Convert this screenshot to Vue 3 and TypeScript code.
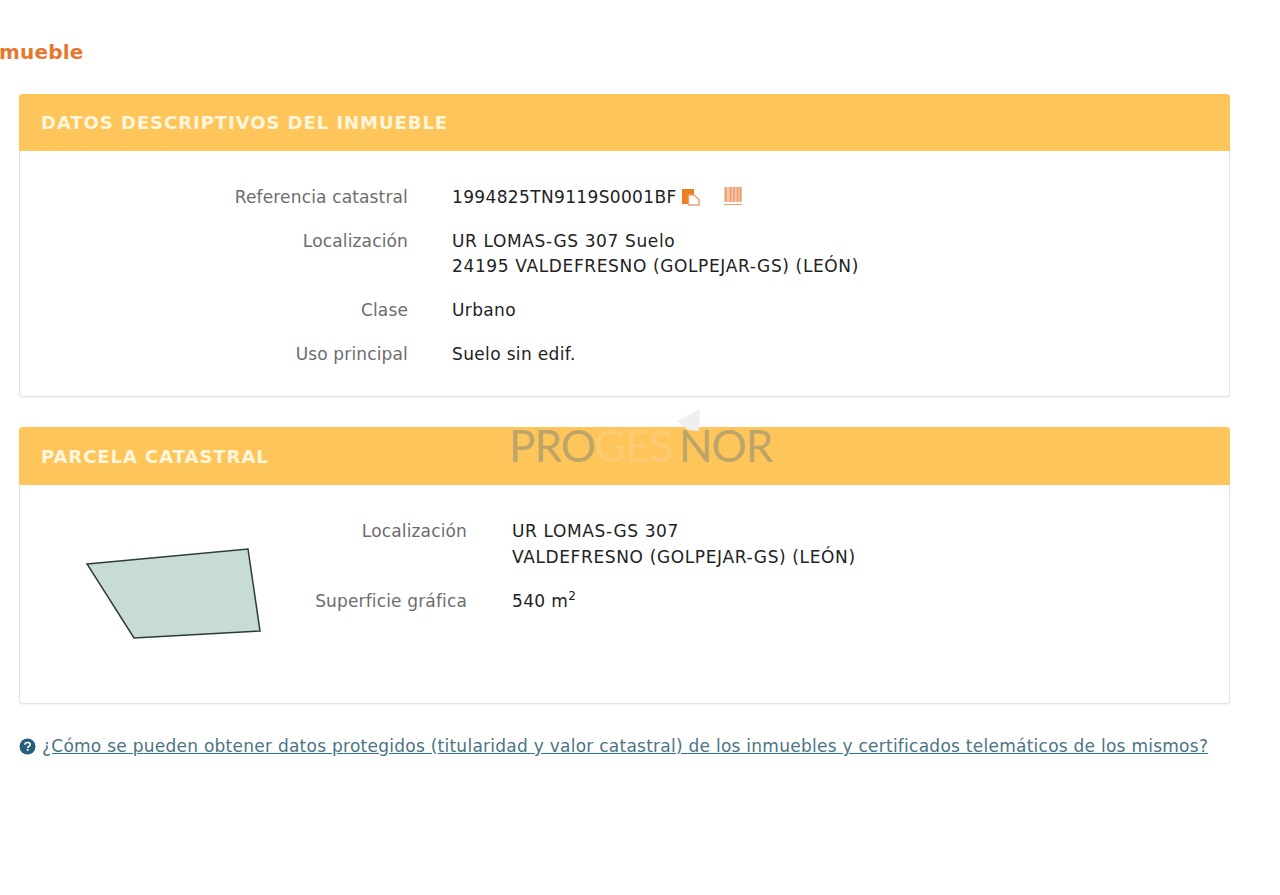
<script setup lang="ts">
interface Row { label: string; lines: string[]; icons?: boolean; sup?: boolean; wide?: boolean }
const rows: Row[] = [
  { label: 'Referencia catastral', lines: ['1994825TN9119S0001BF'], icons: true },
  { label: 'Localización', lines: ['UR LOMAS-GS 307 Suelo', '24195 VALDEFRESNO (GOLPEJAR-GS) (LEÓN)'], wide: true },
  { label: 'Clase', lines: ['Urbano'] },
  { label: 'Uso principal', lines: ['Suelo sin edif.'] },
]
const parcel: Row[] = [
  { label: 'Localización', lines: ['UR LOMAS-GS 307', 'VALDEFRESNO (GOLPEJAR-GS) (LEÓN)'], wide: true },
  { label: 'Superficie gráfica', lines: ['540 m'], sup: true },
]
</script>

<template>
  <main class="page">
    <h1 class="title">mueble</h1>

    <section class="panel first">
      <header class="head">DATOS DESCRIPTIVOS DEL INMUEBLE</header>
      <div class="list">
        <div v-for="r in rows" :key="r.label" class="row">
          <div class="label">{{ r.label }}</div>
          <div class="value" :class="{ wide: r.wide }">
            <div v-for="l in r.lines" :key="l" class="line">
              {{ l }}
              <span v-if="r.icons" class="icons">
                <svg class="copy" width="20" height="18" viewBox="0 0 20 18">
                  <rect x="1" y="1" width="12" height="15" fill="#ee7d22" />
                  <path d="M7.500 7h5.500l5 4.500V17H7.500z" fill="#fff" stroke="#e6a678" stroke-width="1.500" />
                </svg>
                <svg class="bars" width="20" height="19" viewBox="0 0 20 19">
                  <rect x="1" y="0" width="18" height="15" fill="#f7c6ab" />
                  <path d="M3 0v15M7.500 0v15M11 0v15M14.500 0v15M17.500 0v15" stroke="#ec9a68" stroke-width="1.500" />
                  <path d="M1 17.500h18" stroke="#eaa06f" stroke-width="1" />
                </svg>
              </span>
            </div>
          </div>
        </div>
      </div>
    </section>

    <section class="panel second">
      <header class="head">PARCELA CATASTRAL</header>
      <div class="parcel">
        <svg class="shape" width="200" height="110" viewBox="0 0 200 110">
          <polygon points="20,19 181,4 193,86 67,93" fill="#c7dcd5" stroke="#2c3a36" stroke-width="1.500" />
        </svg>
        <div class="parcel-list">
          <div v-for="r in parcel" :key="r.label" class="row">
            <div class="label">{{ r.label }}</div>
            <div class="value" :class="{ wide: r.wide }">
              <div v-for="l in r.lines" :key="l" class="line tall">
                {{ l }}<sup v-if="r.sup">2</sup>
              </div>
            </div>
          </div>
        </div>
      </div>
      <div class="mark" aria-label="PROGESNOR">
        <svg class="mark-tip" width="30" height="22" viewBox="0 0 30 22">
          <polygon points="2,12 25,0 24,22 13,21" fill="#efefef" />
        </svg>
        <span class="pro">PRO</span><span class="ges">GES</span><span class="pro">NOR</span>
      </div>
    </section>

    <p class="help">
      <svg class="q" width="17" height="17" viewBox="0 0 17 17">
        <circle cx="8.500" cy="8.500" r="8" fill="#24607c" />
        <path d="M5.800 6.700c.2-1.500 1.200-2.200 2.700-2.200s2.700.8 2.700 2.100c0 1.800-2.400 1.800-2.400 3.300" fill="none" stroke="#fff" stroke-width="1.700" />
        <rect x="7.800" y="11" width="1.800" height="1.800" fill="#fff" />
      </svg>
      <a class="link" href="#">¿Cómo se pueden obtener datos protegidos (titularidad y valor catastral) de los inmuebles y certificados telemáticos de los mismos?</a>
    </p>
  </main>
</template>

<style>
html, body { margin: 0; background: #fff; }
</style>

<style scoped>
.page {
  width: 1280px;
  height: 895px;
  box-sizing: border-box;
  padding: 0 0 0 19px;
  font-family: "DejaVu Sans", Verdana, sans-serif;
  font-size: 17px;
  color: #222;
  overflow: hidden;
}
.title {
  margin: 40px 0 0 -20px;
  font-size: 20px;
  line-height: 24px;
  font-weight: 700;
  letter-spacing: 0.2px;
  color: #e8772e;
}
.panel {
  position: relative;
  width: 1211px;
  box-sizing: border-box;
  background: #fff;
  border: 1px solid #e2e4e4;
  border-top: 0;
  border-radius: 4px;
  box-shadow: 0 1px 2px rgba(0, 0, 0, 0.06);
}
.first { margin-top: 30px; height: 303px; }
.second { margin-top: 30px; height: 277px; }
.head {
  height: 57px;
  margin: 0 -1px;
  padding: 0 0 0 22px;
  background: #fec55b;
  border-radius: 4px 4px 0 0;
  color: #fff6dc;
  font-size: 18px;
  font-weight: 700;
  letter-spacing: 0.950px;
  line-height: 58px;
  white-space: nowrap;
}
.second .head { height: 58px; line-height: 59px; }
.list { padding-top: 33.500px; display: flex; flex-direction: column; gap: 18.500px; }
.row { display: flex; }
.label { width: 388px; text-align: right; color: #6d6d6d; line-height: 25.500px; flex: none; letter-spacing: 0.150px; }
.value { margin-left: 44px; letter-spacing: 0.350px; }
.value.wide { letter-spacing: 0.630px; }
.line { line-height: 25.500px; white-space: nowrap; }
.line.tall { line-height: 26px; }
.icons { display: inline-flex; align-items: center; gap: 22px; vertical-align: -3px; margin-left: -1px; }
.copy { display: block; }
.bars { display: block; }
.parcel { display: flex; }
.shape { margin: 60px 0 0 47px; flex: none; }
.parcel-list { margin: 33px 0 0 0; display: flex; flex-direction: column; gap: 18px; }
.parcel-list .label { width: 200px; line-height: 26px; }
.parcel-list .value { margin-left: 45px; }
sup { font-size: 12px; line-height: 0; }
.mark {
  position: absolute;
  left: 489px;
  top: -1px;
  display: flex;
  font-family: "Lato", sans-serif;
  font-size: 44px;
  line-height: 38px;
  font-weight: 400;
  height: 38px;
  letter-spacing: -1px;
}
.mark-tip { position: absolute; left: 166px; top: -17px; }
.mark span { display: block; width: 85px; }
.ges { color: #fccb72; }
.pro { color: #bda469; }
.help {
  display: flex;
  align-items: center;
  gap: 6px;
  margin: 30px 0 0 0;
  line-height: 25px;
}
.q { flex: none; }
.link { color: #4b7482; text-decoration: underline; text-decoration-color: #2c7a8a; white-space: nowrap; letter-spacing: 0.255px; }
</style>
